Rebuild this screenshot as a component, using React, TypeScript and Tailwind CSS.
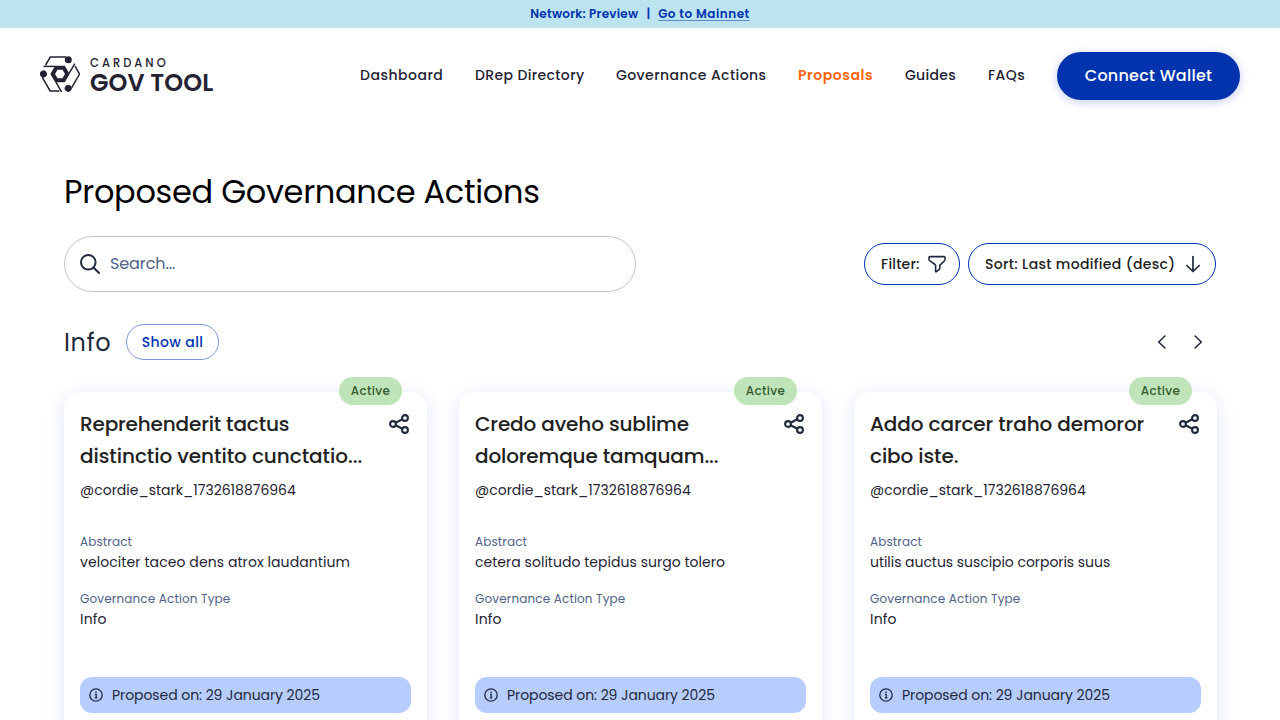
import React from "react";

const navItems = [
  { label: "Dashboard", cls: "w-[83px] tracking-[0.5px]" },
  { label: "DRep Directory", cls: "w-[109px] tracking-[0.37px]" },
  { label: "Governance Actions", cls: "w-[150px] tracking-[0.43px]" },
  { label: "Proposals", cls: "w-[75px] font-semibold tracking-[0.55px] text-[#ff640a]" },
  { label: "Guides", cls: "w-[51px] tracking-[0.3px]" },
  { label: "FAQs", cls: "w-[37px] tracking-[0.4px]" },
];

const cards = [
  {
    lines: [
      { text: "Reprehenderit tactus", cls: "tracking-[-0.16px]" },
      { text: "distinctio ventito cunctatio...", cls: "tracking-[-0.05px]" },
    ],
    abstract: "velociter taceo dens atrox laudantium",
    tracking: "tracking-[0.08px]",
  },
  {
    lines: [
      { text: "Credo aveho sublime", cls: "tracking-[-0.12px]" },
      { text: "doloremque tamquam...", cls: "tracking-[-0.14px]" },
    ],
    abstract: "cetera solitudo tepidus surgo tolero",
    tracking: "tracking-[0.03px]",
  },
  {
    lines: [
      { text: "Addo carcer traho demoror", cls: "tracking-[-0.1px]" },
      { text: "cibo iste.", cls: "tracking-[-0.1px]" },
    ],
    abstract: "utilis auctus suscipio corporis suus",
    tracking: "tracking-[-0.05px]",
  },
];

function Blade({ angle }: { angle: number }) {
  return (
    <g transform={`rotate(${angle})`} fill="none" stroke="#242232" strokeWidth="1.5">
      <path d="M-14.4 -9 L-9.7 -17 H6" />
      <path d="M-16.5 -7.6 H-5" />
      <circle cx="8.3" cy="-14.3" r="3.5" fill="#242232" stroke="none" />
    </g>
  );
}

function Logo() {
  return (
    <div className="mb-[5px] flex w-[173px] items-center gap-[10px] text-[#242232]">
      <svg width="40" height="36" viewBox="-20 -18 40 36" className="shrink-0">
        <Blade angle={0} />
        <Blade angle={120} />
        <Blade angle={240} />
        <path
          fillRule="evenodd"
          fill="#242232"
          d="M-9.6 0 L-4.8 -8.3 H4.8 L9.6 0 L4.8 8.3 H-4.8Z M-5 0 L-2.5 4.2 H2.5 L5 0 L2.5 -4.2 H-2.5Z"
        />
      </svg>
      <div className="flex flex-col pt-1">
        <span className="text-[11.5px] leading-[15px] font-medium tracking-[3px]">CARDANO</span>
        <span className="text-[24px] leading-[24px] font-semibold tracking-[0.08px] whitespace-nowrap">GOV TOOL</span>
      </div>
    </div>
  );
}

function ShareIcon() {
  return (
    <svg width="24" height="24" viewBox="0 0 24 24" fill="none" stroke="#212a3d" strokeWidth="2.1">
      <circle cx="18" cy="6" r="2.9" />
      <circle cx="6" cy="12" r="2.9" />
      <circle cx="18" cy="18" r="2.9" />
      <path d="M8.6 10.7 L15.4 7.3 M8.6 13.3 L15.4 16.7" />
    </svg>
  );
}

function Card({ card }: { card: (typeof cards)[number] }) {
  return (
    <article className="relative h-[420px] w-[363px] shrink-0 rounded-2xl bg-white px-4 pt-4 shadow-[0_4px_20px_0_#e0e5fa]">
      <span className="absolute top-[-15px] right-[25px] flex h-7 w-[63px] items-center justify-center rounded-full bg-[#c0e4ba] text-xs font-medium tracking-[0.33px] text-[#365c2e]">
        Active
      </span>
      <div className="flex items-start justify-between">
        <h3 className="text-xl leading-8 font-medium text-[#212121]">
          {card.lines.map((line) => (
            <span key={line.text} className={`block whitespace-nowrap ${line.cls}`}>{line.text}</span>
          ))}
        </h3>
        <div className="pt-1">
          <ShareIcon />
        </div>
      </div>
      <p className="mt-2 text-sm leading-5 text-[#242232]">@cordie_stark_1732618876964</p>
      <p className="mt-8 text-xs leading-5 tracking-[0.12px] text-[#506288]">Abstract</p>
      <p className={`text-sm leading-5 whitespace-nowrap text-[#242232] ${card.tracking}`}>{card.abstract}</p>
      <p className="mt-[17px] text-xs leading-5 tracking-[0.15px] text-[#506288]">Governance Action Type</p>
      <p className="text-sm leading-5 tracking-[0.2px] text-[#242232]">Info</p>
      <div className="mt-12 flex h-9 items-center gap-2 rounded-xl bg-[#b8cdff] pl-2 text-sm tracking-[-0.07px] text-[#212a3d]">
        <svg width="16" height="16" viewBox="0 0 16 16" fill="none" stroke="#212a3d" strokeWidth="1.3">
          <circle cx="8" cy="8" r="6.2" />
          <path d="M7 7.3 H8.2 V10.7 M6.8 10.8 H9.4" />
          <path d="M7.3 5.2 H8.7" strokeWidth="1.4" />
        </svg>
        Proposed on: 29 January 2025
      </div>
    </article>
  );
}

export default function App() {
  return (
    <div className="h-[720px] w-[1280px] overflow-hidden bg-white font-[Poppins,Inter,sans-serif]">
      <div className="flex h-7 items-center justify-center bg-[#bbe3f0] text-xs font-semibold text-[#0033ad]">
        <span className="tracking-[0.25px]">Network: Preview</span>
        <span className="mx-2">|</span>
        <a className="tracking-[0.5px] underline decoration-[#0033ad]/50 underline-offset-2">Go to Mainnet</a>
      </div>

      <header className="flex h-24 items-center justify-between px-10">
        <Logo />
        <nav className="flex items-center gap-8 text-sm font-medium text-[#242232]">
          {navItems.map((item) => (
            <a key={item.label} className={`pb-[2px] whitespace-nowrap ${item.cls}`}>{item.label}</a>
          ))}
          <button className="h-12 w-[183px] rounded-full bg-[#0033ad] text-base font-medium tracking-[0.24px] text-white shadow-[0_2px_8px_1px_#cdd5f0]">
            Connect Wallet
          </button>
        </nav>
      </header>

      <main className="px-16 pt-[44px]">
        <h1 className="text-[32px] leading-[48px] tracking-[-0.29px] text-black">Proposed Governance Actions</h1>
        <div className="mt-5 flex items-center justify-between">
          <div className="flex h-14 w-[572px] items-center gap-2 rounded-full border border-[#c4c4c4] pl-[13px] text-base tracking-[-0.1px] text-[#506288]">
            <svg width="24" height="24" viewBox="0 0 24 24" fill="none" stroke="#212a3d" strokeWidth="2" strokeLinecap="round">
              <circle cx="10.3" cy="10.3" r="7.3" />
              <path d="M15.7 15.7 L21 21" />
            </svg>
            Search...
          </div>
          <div className="flex gap-2 text-sm font-medium text-[#212121]">
            <button className="flex h-[42px] w-24 items-center justify-between rounded-full border border-[#0033ad] pr-3 pl-4">
              <span className="tracking-[0.2px]">Filter:</span>
              <svg width="20" height="20" viewBox="0 0 20 20" fill="none" stroke="#212a3d" strokeWidth="1.6" strokeLinejoin="round">
                <path d="M3 2.6 H17 C17.7 2.6 18 3 18 3.6 V5.2 C18 6 17.7 6.5 17.2 7 L12.8 11.4 V14.2 C12.8 14.8 12.5 15.2 12.1 15.5 L9.4 17.7 C9 18 8.6 17.7 8.6 17.3 V11.6 C8.6 11.2 8.4 10.8 8.1 10.5 L2.6 6.6 C2.2 6.2 2 5.8 2 5.3 V3.6 C2 3 2.3 2.6 3 2.6Z" />
              </svg>
            </button>
            <button className="flex h-[42px] w-[248px] items-center justify-between rounded-full border border-[#0033ad] pr-3 pl-4">
              <span className="tracking-[0.34px]">Sort: Last modified (desc)</span>
              <svg width="20" height="20" viewBox="0 0 20 20" fill="none" stroke="#212a3d" strokeWidth="1.7" strokeLinecap="round" strokeLinejoin="round">
                <path d="M10 2.5 V17.5 M3.8 11.5 L10 17.5 L16.2 11.5" />
              </svg>
            </button>
          </div>
        </div>

        <div className="mt-8 flex h-9 items-center justify-between">
          <div className="flex items-center">
            <h2 className="w-[62px] pt-[2px] text-2xl tracking-[0.7px] text-[#212a3d]">Info</h2>
            <button className="h-9 w-[93px] rounded-full border border-[#0033ad]/50 text-sm font-medium tracking-[0.4px] text-[#0033ad]">
              Show all
            </button>
          </div>
          <div className="flex gap-4 pr-2">
            <svg width="20" height="20" viewBox="0 0 20 20" fill="none" stroke="#212a3d" strokeWidth="1.6" strokeLinecap="round" strokeLinejoin="round">
              <path d="M12.9 4 L6.7 10 L12.9 16" />
            </svg>
            <svg width="20" height="20" viewBox="0 0 20 20" fill="none" stroke="#212a3d" strokeWidth="1.6" strokeLinecap="round" strokeLinejoin="round">
              <path d="M7.1 4 L13.3 10 L7.1 16" />
            </svg>
          </div>
        </div>

        <section className="mt-8 flex gap-8">
          {cards.map((card) => (
            <Card key={card.abstract} card={card} />
          ))}
        </section>
      </main>
    </div>
  );
}
